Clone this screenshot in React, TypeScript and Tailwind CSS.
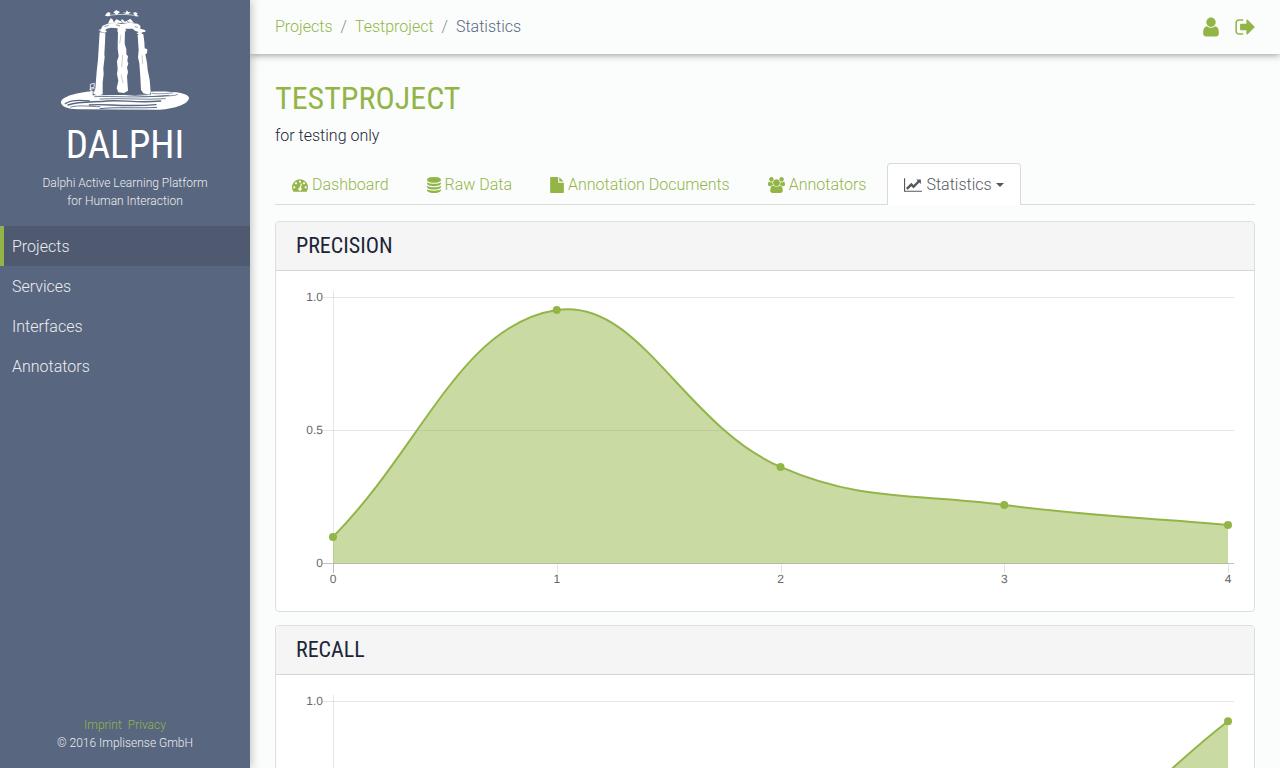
import React from "react";

type IconProps = { d: string; viewBox: string; className: string };

function Icon({ d, viewBox, className }: IconProps) {
  return (
    <svg viewBox={viewBox} className={`shrink-0 ${className}`} fill="currentColor" aria-hidden="true">
      <path d={d} />
    </svg>
  );
}

const DASHBOARD =
  "M384 1152q0-53-37.5-90.5t-90.5-37.5-90.5 37.5-37.5 90.5 37.5 90.5 90.5 37.5 90.5-37.5 37.5-90.5zm192-448q0-53-37.5-90.5t-90.5-37.5-90.5 37.5-37.5 90.5 37.5 90.5 90.5 37.5 90.5-37.5 37.5-90.5zm428 481l101-382q6-26-7.5-48.5t-38.5-29.5-48 6.5-30 39.5l-101 382q-60 5-107 43.5t-63 98.5q-20 77 20 146t117 89 146-20 89-117q16-60-6-117t-72-91zm660-33q0-53-37.5-90.5t-90.5-37.5-90.5 37.5-37.5 90.5 37.5 90.5 90.5 37.5 90.5-37.5 37.5-90.5zm-640-640q0-53-37.5-90.5t-90.5-37.5-90.5 37.5-37.5 90.5 37.5 90.5 90.5 37.5 90.5-37.5 37.5-90.5zm448 192q0-53-37.5-90.5t-90.5-37.5-90.5 37.5-37.5 90.5 37.5 90.5 90.5 37.5 90.5-37.5 37.5-90.5zm320 448q0 261-141 483-19 29-54 29h-1402q-35 0-54-29-141-221-141-483 0-182 71-348t191-286 286-191 348-71 348 71 286 191 191 286 71 348z";
const DATABASE =
  "M896 768q237 0 443-43t325-127v170q0 69-103 128t-280 93.5-385 34.5-385-34.5-280-93.5-103-128v-170q119 84 325 127t443 43zm0 768q237 0 443-43t325-127v170q0 69-103 128t-280 93.5-385 34.5-385-34.5-280-93.5-103-128v-170q119 84 325 127t443 43zm0-384q237 0 443-43t325-127v170q0 69-103 128t-280 93.5-385 34.5-385-34.5-280-93.5-103-128v-170q119 84 325 127t443 43zm0-1152q208 0 385 34.5t280 93.5 103 128v128q0 69-103 128t-280 93.5-385 34.5-385-34.5-280-93.5-103-128v-128q0-69 103-128t280-93.5 385-34.5z";
const FILE =
  "M1152 512v-472q22 14 36 28l408 408q14 14 28 36h-472zm-128 32q0 40 28 68t68 28h544v1056q0 40-28 68t-68 28h-1344q-40 0-68-28t-28-68v-1600q0-40 28-68t68-28h800v544z";
const USERS =
  "M657 896q-162 5-265 128h-134q-82 0-138-40.5t-56-118.5q0-353 124-353 6 0 43.5 21t97.5 42.5 119 21.5q67 0 133-23-5 37-5 66 0 139 81 256zm1071 637q0 120-73 189.5t-194 69.5h-874q-121 0-194-69.5t-73-189.5q0-53 3.5-103.5t14-109 26.5-108.5 43-97.5 62-81 85.5-53.5 111.5-20q10 0 43 21.5t73 48 107 48 135 21.5 135-21.5 107-48 73-48 43-21.5q61 0 111.5 20t85.5 53.5 62 81 43 97.5 26.5 108.5 14 109 3.5 103.5zm-1024-1277q0 106-75 181t-181 75-181-75-75-181 75-181 181-75 181 75 75 181zm704 384q0 159-112.5 271.5t-271.5 112.5-271.5-112.5-112.5-271.5 112.5-271.5 271.5-112.5 271.5 112.5 112.5 271.5zm576 225q0 78-56 118.5t-138 40.5h-134q-103-123-265-128 81-117 81-256 0-29-5-66 66 23 133 23 59 0 119-21.5t97.5-42.5 43.5-21q124 0 124 353zm-128-609q0 106-75 181t-181 75-181-75-75-181 75-181 181-75 181 75 75 181z";
const LINE_CHART =
  "M2048 1536v128h-2048v-1536h128v1408h1920zm-128-1248v435q0 21-19.5 29.5t-35.5-7.5l-121-121-633 633q-10 10-23 10t-23-10l-233-233-416 416-192-192 585-585q10-10 23-10t23 10l233 233 464-464-121-121q-16-16-7.5-35.5t29.5-19.5h435q14 0 23 9t9 23z";
const USER =
  "M1536 1399q0 109-62.5 187t-150.5 78h-854q-88 0-150.5-78t-62.5-187q0-85 8.5-160.5t31.5-152 58.5-131 94-89 134.5-34.5q131 128 313 128t313-128q76 0 134.5 34.5t94 89 58.5 131 31.5 152 8.5 160.5zm-256-887q0 159-112.5 271.5t-271.5 112.5-271.5-112.5-112.5-271.5 112.5-271.5 271.5-112.5 271.5 112.5 112.5 271.5z";
const SIGN_OUT =
  "M704 1440q0 4 1 20t.5 26.5-3 23.5-10 19.5-20.5 6.5h-320q-119 0-203.5-84.5t-84.5-203.5v-704q0-119 84.5-203.5t203.5-84.5h320q13 0 22.5 9.5t9.5 22.5q0 4 1 20t.5 26.5-3 23.5-10 19.5-20.5 6.5h-320q-66 0-113 47t-47 113v704q0 66 47 113t113 47h312l11.5 1 11.5 3 8 5.5 7 9 2 13.5zm928-544q0 26-19 45l-544 544q-19 19-45 19t-45-19-19-45v-288h-448q-26 0-45-19t-19-45v-384q0-26 19-45t45-19h448v-288q0-26 19-45t45-19 45 19l544 544q19 19 19 45z";

function TempleLogo() {
  return (
    <svg viewBox="30 27 390 306" className="h-[102px] w-[130px]" fill="#fff" role="img" aria-label="Dalphi">
      {/* base disc */}
      <path d="M128 274 C80 278 34 290 33 307 C33 320 52 327 84 328 L330 329 C372 326 417 312 417 293 C415 279 372 273 302 275 L303 284 L128 286 Z" />
      <g fill="none" stroke="#596680" strokeLinecap="round">
        <path d="M46 311 C60 301 84 299 118 303" strokeWidth="4" />
        <path d="M54 315 C90 303 130 307 172 303 S262 310 332 303" strokeWidth="4" />
        <path d="M118 315 C160 310 220 322 318 314" strokeWidth="4" />
        <path d="M62 321 C90 314 120 320 150 320" strokeWidth="2.500" />
        <path d="M134 290 C190 287 260 296 356 286" strokeWidth="2.500" />
        <path d="M170 283 C220 278 260 292 330 289 S370 283 382 284" strokeWidth="2.500" />
        <path d="M150 297 C220 293 280 301 346 296" strokeWidth="2.500" />
        <path d="M150 326 C200 320 260 326 320 322" strokeWidth="3" />
        <path d="M306 280 C330 284 350 279 368 279" strokeWidth="2" />
        <path d="M240 280 L262 282" strokeWidth="5" />
      </g>
      {/* stone fragments by the left column */}
      <g fill="none" stroke="#fff" strokeWidth="2.500">
        <path d="M121 253 L133 250 L132 262 L121 264 Z M118 268 L134 266 M123 273 L134 278 M121 264 L125 280" />
      </g>
      {/* columns */}
      <path d="M149 97 L166 100 L165 128 L163 163 L164 172 L160 205 L161 222 L158 248 L158 283 L143 287 L130 281 L136 266 L140 215 L144 178 Z" />
      <path d="M204 90 L225 92 L224 131 L229 148 L229 163 L234 169 L232 182 L235 191 L231 202 L234 217 L231 229 L234 272 L222 279 L205 277 L200 265 L205 242 L201 222 L203 208 L201 184 L206 169 L203 145 Z" />
      <path d="M263 106 L270 98 L280 103 L283 126 L284 145 L292 148 L291 160 L286 163 L291 188 L293 210 L299 239 L302 276 L298 284 L280 280 L273 270 L271 230 L268 190 L264 172 L266 151 Z" />
      {/* capitals and lintel */}
      <path d="M145 91 L153 87 L158 77 L176 70 L199 69 L214 72 L238 68 L263 71 L271 77 L271 86 L285 90 L287 95 L277 97 L272 103 L259 101 L266 96 L255 92 L248 86 L226 86 L229 94 L202 95 L203 85 L183 83 L170 86 L166 91 L171 95 L164 98 L149 96 L155 93 Z" />
      <path d="M177 64 L182 55 L187 57 L191 65 L200 58 L212 64 L216 57 L225 65 L234 61 L241 56 L249 65 L253 68 L175 69 Z" />
      <g fill="none" stroke="#596680" strokeWidth="2">
        <path d="M163 80 L176 76 M198 74 L210 78 M254 80 L263 82" />
        <path d="M191 61 L194 67 M214 63 L218 68 M231 65 L239 67" />
        <path d="M213 104 L209 130 M218 165 L215 202 M213 224 L219 249 M276 166 L278 192" strokeWidth="1" />
      </g>
      {/* top fragments */}
      <path d="M168 42 L174 36 L182 39 L179 44 L182 48 L172 49 L165 47 Z M190 37 L199 30 L204 33 L210 36 L204 41 L199 44 Z M218 36 L228 38 L230 31 L235 36 L243 37 L235 42 L227 42 Z M249 38 L257 37 L263 40 L260 44 L267 49 L256 49 L253 44 Z" />
      <path d="M172 47 C195 42 240 42 262 48" fill="none" stroke="#fff" strokeWidth="2" />
    </svg>
  );
}

type Pt = { x: number; y: number };

const LEFT = 37;
const RIGHT = 932;
const TOP = 6.5;
const BOTTOM = 272.5;

/* Tension spline through the points, control points kept within the plot area. */
function splinePath(pts: Pt[]): string {
  const tension = 0.4;
  const clamp = (y: number) => Math.min(BOTTOM, Math.max(TOP, y));
  const controls = pts.map((p, i) => {
    const prev = pts[i - 1] ?? p;
    const next = pts[i + 1] ?? p;
    const d01 = Math.hypot(p.x - prev.x, p.y - prev.y);
    const d12 = Math.hypot(next.x - p.x, next.y - p.y);
    const fa = (tension * d01) / (d01 + d12);
    const fb = (tension * d12) / (d01 + d12);
    return {
      before: { x: p.x - fa * (next.x - prev.x), y: clamp(p.y - fa * (next.y - prev.y)) },
      after: { x: p.x + fb * (next.x - prev.x), y: clamp(p.y + fb * (next.y - prev.y)) },
    };
  });
  return pts
    .map((p, i) => {
      if (i === 0) return `M${p.x} ${p.y}`;
      const a = controls[i - 1].after;
      const b = controls[i].before;
      return `C${a.x} ${a.y} ${b.x} ${b.y} ${p.x} ${p.y}`;
    })
    .join(" ");
}

function AreaChart({ label, values }: { label: string; values: number[] }) {
  const step = (RIGHT - LEFT) / (values.length - 1);
  const pts = values.map((v, i) => ({ x: LEFT + i * step, y: BOTTOM - v * (BOTTOM - TOP) }));
  const line = splinePath(pts);
  return (
    <svg viewBox="0 0 938 300" className="block h-auto w-full" role="img" aria-label={label}>
      <g stroke="#000" strokeOpacity="0.1" shapeRendering="crispEdges">
        <path d="M27 6.500H938M27 139.500H938" />
        <path d="M37.500 0V272" />
        {pts.slice(1).map((p) => (
          <path key={p.x} d={`M${Math.round(p.x) + 0.5} 273V282`} />
        ))}
      </g>
      <path d="M27 272.500H938M37.500 273V282" stroke="#000" strokeOpacity="0.25" shapeRendering="crispEdges" />
      <g fill="#666" fontSize="12" fontFamily="'Liberation Sans', Arial, sans-serif" textRendering="geometricPrecision">
        {["1.0", "0.5", "0"].map((t, i) => (
          <text key={t} x="27" y={10 + i * 133} textAnchor="end">
            {t}
          </text>
        ))}
        {pts.map((p, i) => (
          <text key={p.x} x={p.x} y="292" textAnchor="middle">
            {i}
          </text>
        ))}
      </g>
      <path d={`${line} L${RIGHT} ${BOTTOM} L${LEFT} ${BOTTOM}Z`} fill="#93b548" fillOpacity="0.5" />
      <path d={line} fill="none" stroke="#93b548" strokeWidth="2" />
      {pts.map((p) => (
        <circle key={p.x} cx={p.x} cy={p.y} r="4" fill="#93b548" />
      ))}
    </svg>
  );
}

function ChartCard({ title, values }: { title: string; values: number[] }) {
  return (
    <section className="rounded border border-[#dddfdf] bg-white">
      <header className="rounded-t border-b border-[#d6d6d6] bg-[#f5f5f5] px-5 py-3">
        <h2 className="font-['Roboto_Condensed',Roboto,sans-serif] text-[22px] leading-6 font-normal text-[#1c2536] uppercase">
          {title}
        </h2>
      </header>
      <div className="p-5">
        <AreaChart label={title} values={values} />
      </div>
    </section>
  );
}

const NAV = ["Projects", "Services", "Interfaces", "Annotators"];

const TABS = [
  { label: "Dashboard", d: DASHBOARD, viewBox: "0 0 1792 1792", size: "h-4 w-4" },
  { label: "Raw Data", d: DATABASE, viewBox: "128 0 1536 1792", size: "h-4 w-[14px]" },
  { label: "Annotation Documents", d: FILE, viewBox: "128 0 1536 1792", size: "h-4 w-[14px]" },
  { label: "Annotators", d: USERS, viewBox: "64 0 1920 1792", size: "h-4 w-[17px]" },
];

export default function App() {
  return (
    <div className="flex min-h-screen bg-[#fbfdfc] font-[Roboto,'Liberation_Sans',sans-serif] text-base font-light text-[#1c2536]">
      <aside className="sticky top-0 z-20 flex h-screen w-[250px] shrink-0 flex-col bg-[#596680] text-[#eceeef] shadow-[0_0_10px_rgba(0,0,0,0.3)]">
        <div className="flex flex-col items-center pt-[9px] text-center">
          <TempleLogo />
          <h1 className="mt-3 font-['Roboto_Condensed',Roboto,sans-serif] text-[39px] leading-11 font-normal text-white">
            DALPHI
          </h1>
          <p className="mt-[7px] text-xs leading-[18px]">
            Dalphi Active Learning Platform
            <br />
            for Human Interaction
          </p>
        </div>
        <nav className="mt-4 flex flex-col" aria-label="Main">
          {NAV.map((item, i) => (
            <a
              key={item}
              href="#"
              className={
                i === 0
                  ? "border-l-4 border-[#93b548] bg-[#4f5a71] px-2 pt-[9px] pb-[7px] leading-6"
                  : "border-l-4 border-transparent px-2 pt-[9px] pb-[7px] leading-6"
              }
            >
              {item}
            </a>
          ))}
        </nav>
        <footer className="mt-auto pb-4 text-center text-xs leading-[18px]">
          <div className="flex justify-center gap-[6px] text-[#93b548]">
            <a href="#">Imprint</a>
            <a href="#">Privacy</a>
          </div>
          <p>© 2016 Implisense GmbH</p>
        </footer>
      </aside>

      <div className="flex min-w-0 grow flex-col">
        <header className="sticky top-0 z-10 flex h-[54px] items-center justify-between bg-[#fbfdfc] px-[25px] shadow-[0_0_8px_rgba(0,0,0,0.5)]">
          <nav aria-label="Breadcrumb">
            <ol className="flex gap-2 leading-6">
              <li>
                <a href="#" className="text-[#93b548]">Projects</a>
              </li>
              <li className="text-[#818a91]" aria-hidden="true">/</li>
              <li>
                <a href="#" className="text-[#93b548]">Testproject</a>
              </li>
              <li className="text-[#818a91]" aria-hidden="true">/</li>
              <li className="text-[#596680]" aria-current="page">Statistics</li>
            </ol>
          </nav>
          <div className="flex items-center gap-4 text-[#93b548]">
            <a href="#" aria-label="Account">
              <Icon d={USER} viewBox="256 0 1280 1792" className="h-[22px] w-4" />
            </a>
            <a href="#" aria-label="Sign out">
              <Icon d={SIGN_OUT} viewBox="64 0 1568 1792" className="h-[22px] w-5" />
            </a>
          </div>
        </header>

        <main className="px-[25px] pt-6 pb-6">
          <h1 className="font-['Roboto_Condensed',Roboto,sans-serif] text-[32px] leading-10 font-normal text-[#93b548] uppercase">
            Testproject
          </h1>
          <p className="mt-[6px] leading-6">for testing only</p>

          <nav className="mt-[15px] flex gap-1 border-b border-[#d9dbdb]" aria-label="Project">
            {TABS.map((tab) => (
              <a
                key={tab.label}
                href="#"
                className="-mb-px flex items-center gap-1 border border-transparent px-4 pt-[9px] pb-[7px] leading-6 text-[#93b548]"
              >
                <Icon d={tab.d} viewBox={tab.viewBox} className={tab.size} />
                {tab.label}
              </a>
            ))}
            <button
              type="button"
              className="-mb-px flex items-center gap-1 rounded-t border border-b-0 border-[#d9dbdb] bg-white px-4 pt-[9px] pb-2 leading-6 text-[#55595c]"
            >
              <Icon d={LINE_CHART} viewBox="0 0 2048 1792" className="h-4 w-[18px]" />
              Statistics
              <svg viewBox="0 0 8 4" className="h-1 w-2" fill="currentColor" aria-hidden="true">
                <path d="M0 0H8L4 4Z" />
              </svg>
            </button>
          </nav>

          <div className="mt-4 flex flex-col gap-[13px]">
            <ChartCard title="Precision" values={[0.1, 0.953, 0.363, 0.22, 0.145]} />
            <ChartCard title="Recall" values={[0.05, 0.1, 0.2, 0.28, 0.926]} />
          </div>
        </main>
      </div>
    </div>
  );
}
